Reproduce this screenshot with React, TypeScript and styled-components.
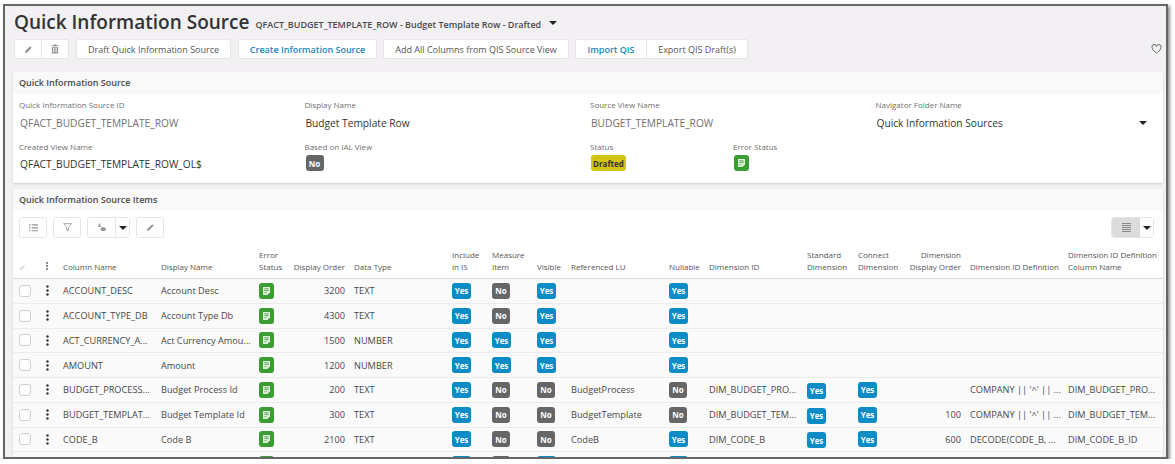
import React from "react";
import styled, { createGlobalStyle } from "styled-components";

const Global = createGlobalStyle`
  html, body { margin: 0; padding: 0; background: #fff; }
  body { font-family: "Open Sans", "Liberation Sans", sans-serif; color: #474747; }
`;

const COLS = "24px 20px 98px 98px 32px 63px 98px 40px 45px 34px 98px 40px 98px 51px 42px 70px 98px 1fr";

const Frame = styled.div`
  box-sizing: border-box;
  margin: 4px 0 0 3px;
  width: 1165px;
  height: 455px;
  border: 2px solid #666;
  background: #f2f0f3;
  box-shadow: 2px 2px 3px rgba(0, 0, 0, 0.45);
  overflow: hidden;
  padding: 0 3px 0 8px;
`;
const TitleRow = styled.div`
  display: flex;
  align-items: center;
  height: 33px;
  padding-left: 1px;
`;
const Title = styled.h1`
  margin: 0;
  font-size: 19px;
  line-height: 33px;
  font-weight: 600;
  color: #333;
`;
const SubTitle = styled.span`
  font-size: 9px;
  font-weight: 600;
  color: #4a4a4a;
  margin: 4px 0 0 6px;
`;
const Caret = styled.span<{ $ml?: number }>`
  display: inline-block;
  width: 0;
  height: 0;
  border-left: 4px solid transparent;
  border-right: 4px solid transparent;
  border-top: 4px solid #222;
  margin-left: ${(p) => p.$ml ?? 0}px;
`;
const Toolbar = styled.div`
  display: flex;
  align-items: center;
  height: 20px;
  padding-left: 1px;
`;
const ActionGroup = styled.div<{ $mr: number }>`
  display: flex;
  height: 20px;
  margin-right: ${(p) => p.$mr}px;
  background: #fff;
  border: 1px solid #e7e5e8;
  border-radius: 2px;
  box-sizing: border-box;
`;
const ActionButton = styled.button<{ $w: number; $blue?: boolean; $div?: boolean }>`
  box-sizing: border-box;
  width: ${(p) => p.$w}px;
  height: 18px;
  border: 0;
  border-left: ${(p) => (p.$div ? "1px solid #e7e5e8" : "0")};
  background: transparent;
  padding: 0;
  font: ${(p) => (p.$blue ? 600 : 400)} 9px "Open Sans", sans-serif;
  color: ${(p) => (p.$blue ? "#1b84bd" : "#555")};
  display: flex;
  align-items: center;
  justify-content: center;
  svg { color: #8c8c8c; }
`;
const Spacer = styled.div`
  flex: 1;
`;
const HeartWrap = styled.span`
  display: flex;
  margin: 0 1px 0 0;
  color: #666;
`;
const Card = styled.section<{ $mt: number; $h: number }>`
  margin-top: ${(p) => p.$mt}px;
  height: ${(p) => p.$h}px;
  background: #fff;
  box-shadow: 0 1px 2px rgba(0, 0, 0, 0.14);
  overflow: hidden;
`;
const CardHeader = styled.h2`
  margin: 0;
  height: 22px;
  line-height: 22px;
  background: #f9f9f9;
  padding-left: 6px;
  font-size: 9px;
  font-weight: 600;
  color: #4a4a4a;
`;
const Fields = styled.div`
  display: grid;
  grid-template-columns: repeat(4, 285.5px);
  padding: 5px 0 0 6px;
`;
const Field = styled.div<{ $h: number }>`
  height: ${(p) => p.$h}px;
`;
const SplitField = styled.div`
  display: grid;
  grid-template-columns: 143px 1fr;
`;
const Label = styled.div`
  font-size: 8px;
  line-height: 12px;
  color: #6f6f6f;
`;
const Value = styled.div<{ $muted?: boolean; $mt: number }>`
  display: flex;
  justify-content: space-between;
  align-items: center;
  font-size: 10.2px;
  line-height: 14px;
  margin-top: ${(p) => p.$mt}px;
  padding: 0 14px 0 1px;
  color: ${(p) => (p.$muted ? "#707070" : "#333")};
`;
const FieldBadges = styled.div`
  display: flex;
  margin: 2px 0 0 1px;
`;
const Badge = styled.span<{ $kind: "yes" | "no" | "drafted" }>`
  display: inline-flex;
  align-items: center;
  justify-content: center;
  box-sizing: border-box;
  height: 16px;
  min-width: ${(p) => (p.$kind === "yes" ? 19 : 18)}px;
  padding: 0 2px;
  border-radius: 3px;
  font-size: 8px;
  font-weight: 700;
  background: ${(p) => (p.$kind === "yes" ? "#0b8cc7" : p.$kind === "no" ? "#666" : "#d4c414")};
  color: ${(p) => (p.$kind === "drafted" ? "#333" : "#fff")};
`;
const ErrorBadge = styled.span`
  display: inline-flex;
  align-items: center;
  justify-content: center;
  width: 15px;
  height: 16px;
  border-radius: 3px;
  background: #3a9e32;
`;
const GridTools = styled.div`
  display: flex;
  gap: 6px;
  align-items: center;
  padding: 6px 9px 0 6px;
  height: 21px;
`;
const ToolGroup = styled.div`
  display: flex;
  box-sizing: border-box;
  height: 21px;
  border: 1px solid #e6e6e6;
  border-radius: 3px;
  background: #fff;
  overflow: hidden;
`;
const ToolButton = styled.span<{ $w: number; $div?: boolean; $on?: boolean }>`
  display: flex;
  align-items: center;
  justify-content: center;
  width: ${(p) => p.$w}px;
  border-left: ${(p) => (p.$div ? "1px solid #e6e6e6" : "0")};
  background: ${(p) => (p.$on ? "#dcdcdc" : "#fff")};
  color: #969696;
`;
const HeaderRow = styled.div`
  display: grid;
  grid-template-columns: ${COLS};
  height: 40px;
  padding-left: 6px;
  align-items: end;
  border-bottom: 1px solid #dedede;
  font-size: 8px;
  line-height: 12px;
  color: #555;
`;
const HeadCell = styled.div<{ $right?: boolean }>`
  padding: 0 ${(p) => (p.$right ? 9 : 0)}px 5px 0;
  text-align: ${(p) => (p.$right ? "right" : "left")};
  white-space: nowrap;
`;
const Row = styled.div`
  display: grid;
  grid-template-columns: ${COLS};
  box-sizing: border-box;
  height: 24.75px;
  padding-left: 6px;
  align-items: center;
  background: #fafafa;
  border-bottom: 1px solid #ececec;
  font-size: 9.2px;
  color: #484848;
`;
const Cell = styled.div<{ $right?: boolean; $low?: boolean }>`
  display: flex;
  justify-content: ${(p) => (p.$right ? "flex-end" : "flex-start")};
  padding: ${(p) => (p.$low ? "2px" : "0")} ${(p) => (p.$right ? 9 : 0)}px 0 0;
  white-space: nowrap;
`;
const Check = styled.span`
  box-sizing: border-box;
  display: block;
  width: 12px;
  height: 12px;
  border: 1px solid #cfcfcf;
  border-radius: 3px;
  background: #fff;
`;
const DotsWrap = styled.span`
  display: flex;
  padding-left: 3px;
  color: #333;
`;

const Pencil = () => (
  <svg width="9" height="9" viewBox="0 0 10 10" fill="currentColor"><path d="M1 9l.6-2.200L6.900 1.500l1.600 1.600L3.200 8.400z" /></svg>
);
const Trash = () => (
  <svg width="8" height="10" viewBox="0 0 9 10" fill="currentColor"><path d="M3 0h3v1h3v1H0V1h3zM1 3h7v7H1zm1.200 1v5h1V4zm2 0v5h.8V4zm1.800 0v5h.8V4z" fillRule="evenodd" /></svg>
);
const Heart = () => (
  <svg width="11" height="10" viewBox="0 0 24 22" fill="none" stroke="currentColor" strokeWidth="2.2"><path d="M12 20S2 14 2 7a5 5 0 0 1 10-1.500A5 5 0 0 1 22 7c0 7-10 13-10 13z" /></svg>
);
const ListIcon = () => (
  <svg width="9" height="8" viewBox="0 0 11 9" fill="currentColor"><path d="M0 0h2v1.400H0zM3.500 0H11v1.400H3.500zM0 3.600h2V5H0zM3.500 3.600H11V5H3.500zM0 7.200h2v1.400H0zM3.500 7.200H11v1.400H3.500z" /></svg>
);
const Filter = () => (
  <svg width="9" height="9" viewBox="0 0 10 10" fill="none" stroke="currentColor" strokeWidth="0.9"><path d="M.7.7h8.600L6 5v3.800L4 7.600V5z" /></svg>
);
const Bucket = () => (
  <svg width="10" height="9" viewBox="0 0 11 10" fill="currentColor"><path d="M2 .5h1.600v3H2zM1 3.500h4v1H1zM4 5.500c2-1.500 5-1 6 1 .4 1-.8 2.500-3 2.500S3.200 7.500 4 5.500z" /></svg>
);
const Lines = () => (
  <svg width="9" height="9" viewBox="0 0 9 9" fill="#888"><path d="M0 0h9v1H0zM0 2h9v1H0zM0 4h9v1H0zM0 6h9v1H0zM0 8h9v1H0z" /></svg>
);
const Dots = () => (
  <svg width="3" height="11" viewBox="0 0 3 11" fill="currentColor"><circle cx="1.500" cy="1.500" r="1.200" /><circle cx="1.500" cy="5.500" r="1.200" /><circle cx="1.500" cy="9.500" r="1.200" /></svg>
);
const SmallDots = () => (
  <svg width="2" height="8" viewBox="0 0 2 8" fill="#555"><circle cx="1" cy="1" r="0.900" /><circle cx="1" cy="4" r="0.900" /><circle cx="1" cy="7" r="0.900" /></svg>
);
const HeadDots = styled.span`
  display: block;
  padding-left: 3px;
`;
const Tick = () => (
  <svg width="6" height="5" viewBox="0 0 7 6" fill="none" stroke="#aaa" strokeWidth="1"><path d="M.6 3.200l2 2L6.400.7" /></svg>
);
const DocIcon = () => (
  <svg width="7" height="8" viewBox="0 0 8 9"><path d="M0 0h8v6L5 9H0z" fill="#dff0da" /><path d="M1.500 2h5M1.500 3.800h5" stroke="#2f8f2a" strokeWidth="0.8" /><path d="M1.800 6l1 1 1.500-1.600" stroke="#2f8f2a" strokeWidth="0.8" fill="none" /></svg>
);
const ErrorIcon = () => (
  <ErrorBadge>
    <DocIcon />
  </ErrorBadge>
);

type RowData = {
  col?: string; disp?: string; order?: string; type?: string;
  inc: boolean; meas: boolean; vis: boolean; lu?: string; nul: boolean;
  dim?: string; dimOrder?: string; def?: string; defCol?: string; clipped?: boolean;
};
const rows: RowData[] = [
  { col: "ACCOUNT_DESC", disp: "Account Desc", order: "3200", type: "TEXT", inc: true, meas: false, vis: true, nul: true },
  { col: "ACCOUNT_TYPE_DB", disp: "Account Type Db", order: "4300", type: "TEXT", inc: true, meas: false, vis: true, nul: true },
  { col: "ACT_CURRENCY_A...", disp: "Act Currency Amou...", order: "1500", type: "NUMBER", inc: true, meas: true, vis: true, nul: true },
  { col: "AMOUNT", disp: "Amount", order: "1200", type: "NUMBER", inc: true, meas: true, vis: true, nul: true },
  { col: "BUDGET_PROCESS...", disp: "Budget Process Id", order: "200", type: "TEXT", inc: true, meas: false, vis: false, lu: "BudgetProcess", nul: false, dim: "DIM_BUDGET_PRO...", def: "COMPANY || '^' || ...", defCol: "DIM_BUDGET_PRO..." },
  { col: "BUDGET_TEMPLAT...", disp: "Budget Template Id", order: "300", type: "TEXT", inc: true, meas: false, vis: false, lu: "BudgetTemplate", nul: false, dim: "DIM_BUDGET_TEM...", dimOrder: "100", def: "COMPANY || '^' || ...", defCol: "DIM_BUDGET_TEM..." },
  { col: "CODE_B", disp: "Code B", order: "2100", type: "TEXT", inc: true, meas: false, vis: false, lu: "CodeB", nul: true, dim: "DIM_CODE_B", dimOrder: "600", def: "DECODE(CODE_B, ...", defCol: "DIM_CODE_B_ID" },
  { inc: true, meas: false, vis: true, nul: true, clipped: true },
];

const YesNo = ({ v, blank }: { v: boolean; blank?: boolean }) => (
  <Badge $kind={v ? "yes" : "no"}>{blank ? null : v ? "Yes" : "No"}</Badge>
);

export default function App() {
  return (
    <>
      <Global />
      <Frame>
        <TitleRow>
          <Title>Quick Information Source</Title>
          <SubTitle>QFACT_BUDGET_TEMPLATE_ROW - Budget Template Row - Drafted</SubTitle>
          <Caret $ml={8} />
        </TitleRow>
        <Toolbar>
          <ActionGroup $mr={7}>
            <ActionButton $w={26}><Pencil /></ActionButton>
            <ActionButton $w={27} $div><Trash /></ActionButton>
          </ActionGroup>
          <ActionGroup $mr={7}><ActionButton $w={153}>Draft Quick Information Source</ActionButton></ActionGroup>
          <ActionGroup $mr={6}><ActionButton $w={137} $blue>Create Information Source</ActionButton></ActionGroup>
          <ActionGroup $mr={6}><ActionButton $w={184}>Add All Columns from QIS Source View</ActionButton></ActionGroup>
          <ActionGroup $mr={0}>
            <ActionButton $w={70} $blue>Import QIS</ActionButton>
            <ActionButton $w={101} $div>Export QIS Draft(s)</ActionButton>
          </ActionGroup>
          <Spacer />
          <HeartWrap><Heart /></HeartWrap>
        </Toolbar>
        <Card $mt={13} $h={111}>
          <CardHeader>Quick Information Source</CardHeader>
          <Fields>
            <Field $h={42}><Label>Quick Information Source ID</Label><Value $mt={5} $muted>QFACT_BUDGET_TEMPLATE_ROW</Value></Field>
            <Field $h={42}><Label>Display Name</Label><Value $mt={5}>Budget Template Row</Value></Field>
            <Field $h={42}><Label>Source View Name</Label><Value $mt={5} $muted>BUDGET_TEMPLATE_ROW</Value></Field>
            <Field $h={42}><Label>Navigator Folder Name</Label><Value $mt={5}>Quick Information Sources<Caret /></Value></Field>
            <Field $h={38}><Label>Created View Name</Label><Value $mt={4}>QFACT_BUDGET_TEMPLATE_ROW_OL$</Value></Field>
            <Field $h={38}><Label>Based on IAL View</Label><FieldBadges><Badge $kind="no">No</Badge></FieldBadges></Field>
            <SplitField>
              <Field $h={38}><Label>Status</Label><FieldBadges><Badge $kind="drafted">Drafted</Badge></FieldBadges></Field>
              <Field $h={38}><Label>Error Status</Label><FieldBadges><ErrorIcon /></FieldBadges></Field>
            </SplitField>
          </Fields>
        </Card>
        <Card $mt={6} $h={280}>
          <CardHeader>Quick Information Source Items</CardHeader>
          <GridTools>
            <ToolGroup><ToolButton $w={26}><ListIcon /></ToolButton></ToolGroup>
            <ToolGroup><ToolButton $w={26}><Filter /></ToolButton></ToolGroup>
            <ToolGroup>
              <ToolButton $w={27}><Bucket /></ToolButton>
              <ToolButton $w={13} $div><Caret /></ToolButton>
            </ToolGroup>
            <ToolGroup><ToolButton $w={26}><Pencil /></ToolButton></ToolGroup>
            <Spacer />
            <ToolGroup>
              <ToolButton $w={28} $on><Lines /></ToolButton>
              <ToolButton $w={13}><Caret /></ToolButton>
            </ToolGroup>
          </GridTools>
          <HeaderRow>
            <HeadCell><Tick /></HeadCell>
            <HeadCell><HeadDots><SmallDots /></HeadDots></HeadCell>
            <HeadCell>Column Name</HeadCell>
            <HeadCell>Display Name</HeadCell>
            <HeadCell>Error<br />Status</HeadCell>
            <HeadCell $right>Display Order</HeadCell>
            <HeadCell>Data Type</HeadCell>
            <HeadCell>Include<br />in IS</HeadCell>
            <HeadCell>Measure<br />Item</HeadCell>
            <HeadCell>Visible</HeadCell>
            <HeadCell>Referenced LU</HeadCell>
            <HeadCell>Nullable</HeadCell>
            <HeadCell>Dimension ID</HeadCell>
            <HeadCell>Standard<br />Dimension</HeadCell>
            <HeadCell>Connect<br />Dimension</HeadCell>
            <HeadCell $right>Dimension<br />Display Order</HeadCell>
            <HeadCell>Dimension ID Definition</HeadCell>
            <HeadCell>Dimension ID Definition<br />Column Name</HeadCell>
          </HeaderRow>
          {rows.map((r, i) => (
            <Row key={i}>
              <Cell><Check /></Cell>
              <Cell><DotsWrap><Dots /></DotsWrap></Cell>
              <Cell>{r.col}</Cell>
              <Cell>{r.disp}</Cell>
              <Cell><ErrorIcon /></Cell>
              <Cell $right>{r.order}</Cell>
              <Cell>{r.type}</Cell>
              <Cell><YesNo v={r.inc} blank={r.clipped} /></Cell>
              <Cell><YesNo v={r.meas} blank={r.clipped} /></Cell>
              <Cell><YesNo v={r.vis} blank={r.clipped} /></Cell>
              <Cell>{r.lu}</Cell>
              <Cell><YesNo v={r.nul} blank={r.clipped} /></Cell>
              <Cell>{r.dim}</Cell>
              <Cell $low>{r.dim && <Badge $kind="yes">Yes</Badge>}</Cell>
              <Cell>{r.dim && <Badge $kind="yes">Yes</Badge>}</Cell>
              <Cell $right>{r.dimOrder}</Cell>
              <Cell>{r.def}</Cell>
              <Cell>{r.defCol}</Cell>
            </Row>
          ))}
        </Card>
      </Frame>
    </>
  );
}
